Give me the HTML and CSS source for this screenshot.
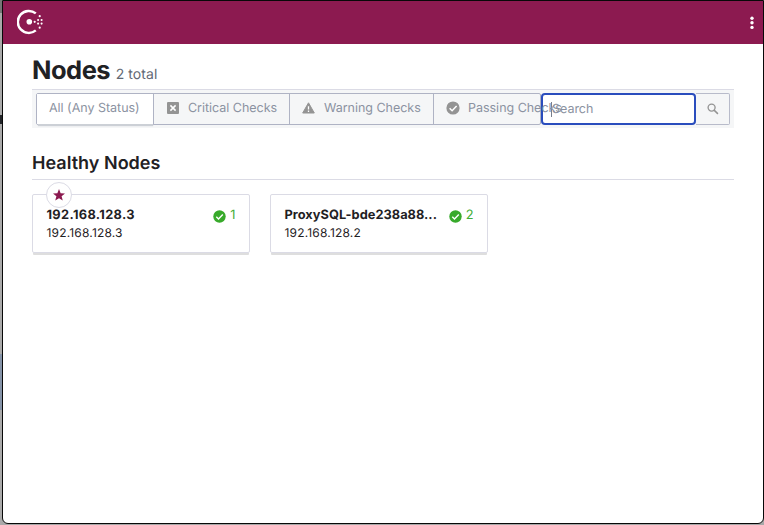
FILE: index.html
```html
<!DOCTYPE html>
<html lang="en">
<head>
<meta charset="utf-8">
<title>Nodes</title>
<link rel="stylesheet" href="styles.css">
</head>
<body>
<div class="edge"><i class="tab"></i><i class="panel"></i></div>
<div class="window">
  <header class="topbar">
    <svg class="logo" width="27" height="26" viewBox="0 0 27 26">
      <path d="M18.8 4.4A11 11 0 1 0 18.8 21.4" fill="none" stroke="#fff" stroke-width="2.5"/>
      <g fill="#fff"><circle cx="12.3" cy="12.8" r="2.8"/><circle cx="17.7" cy="12.8" r="1.1"/><circle cx="21.1" cy="11" r="1.05"/><circle cx="21.1" cy="14.6" r="1.05"/><circle cx="24.6" cy="11" r="1.05"/><circle cx="24.6" cy="14.6" r="1.05"/><circle cx="22.7" cy="7.2" r="1.1"/><circle cx="22.7" cy="18.7" r="1.1"/></g>
    </svg>
    <svg class="more" width="4" height="14" viewBox="0 0 4 14" fill="#fff"><circle cx="2" cy="2.3" r="1.7"/><circle cx="2" cy="6.8" r="1.7"/><circle cx="2" cy="11.4" r="1.7"/></svg>
  </header>
  <main class="content">
    <div class="heading"><h1>Nodes</h1><span class="total">2 total</span></div>
    <div class="filters">
      <div class="group">
        <button class="filter active">All (Any Status)</button>
        <button class="filter critical"><svg width="12" height="12" viewBox="0 0 12 12"><rect width="12" height="12" rx="1" fill="#949494"/><path d="M3.4 3.4l5.2 5.2M8.6 3.4L3.4 8.6" stroke="#fff" stroke-width="1.5"/></svg>Critical Checks</button>
        <button class="filter warning"><svg width="13" height="12" viewBox="0 0 13 12"><path d="M6.5.8L12.3 11H.7z" fill="#949494" stroke="#949494" stroke-linejoin="round"/><path d="M6.5 4.3v3.2M6.5 8.6v1.3" stroke="#fff" stroke-width="1.3"/></svg>Warning Checks</button>
        <button class="filter passing"><svg width="14" height="14" viewBox="0 0 14 14"><circle cx="7" cy="7" r="6.6" fill="#949494"/><path d="M3.6 7.2l2.5 2.5 4.5-4.8" fill="none" stroke="#fff" stroke-width="1.5"/></svg><span>Passing Checks</span></button>
      </div>
      <div class="search"><span class="caret"></span><span class="placeholder">Search</span></div>
      <button class="go"><svg width="12" height="12" viewBox="0 0 12 12" fill="none" stroke="#949494"><circle cx="4.6" cy="4.6" r="3.5" stroke-width="1.35"/><path d="M7.1 7.1l3.8 3.8" stroke-width="1.5"/></svg></button>
    </div>
    <h2>Healthy Nodes</h2>
    <div class="cards">
      <article class="card">
        <span class="leader"><svg width="12" height="12" viewBox="0 0 24 24"><path fill="#8c1a50" d="M12 0l3.3 8.3 8.7.5-6.8 5.5 2.3 8.9L12 18.5l-7.5 4.7 2.3-8.9L0 8.8l8.7-.5z"/></svg></span>
        <div class="name-row"><strong class="address">192.168.128.3</strong><span class="checks"><svg width="13" height="13" viewBox="0 0 13 13"><circle cx="6.5" cy="6.5" r="6.2" fill="#38aa2b"/><path d="M3.3 6.8l2.2 2.2 4.3-4.4" fill="none" stroke="#fff" stroke-width="1.4"/></svg>1</span></div>
        <p>192.168.128.3</p>
      </article>
      <article class="card">
        <div class="name-row"><strong>ProxySQL-bde238a88...</strong><span class="checks"><svg width="13" height="13" viewBox="0 0 13 13"><circle cx="6.5" cy="6.5" r="6.2" fill="#38aa2b"/><path d="M3.3 6.8l2.2 2.2 4.3-4.4" fill="none" stroke="#fff" stroke-width="1.4"/></svg>2</span></div>
        <p>192.168.128.2</p>
      </article>
    </div>
  </main>
</div>
</body>
</html>
```
FILE: styles.css
```css
* { box-sizing: border-box; }
body { margin: 0; height: 525px; display: flex; overflow: hidden; background: #a8a8a8; font-family: Inter, sans-serif; color: #1f2124; text-rendering: geometricPrecision; }
h1, h2, p { margin: 0; }
button { font: inherit; margin: 0; text-rendering: inherit; }
svg { display: block; flex: none; }
.edge { width: 2px; height: 525px; flex: none; background: linear-gradient(#777 0 13px, #aaa 13px); }
.edge .tab { display: block; height: 9px; margin-top: 115px; background: #222428; }
.edge .panel { display: block; height: 56px; margin-top: 230px; background: #8593a8; }
.window { width: 762px; height: 524px; flex: none; border: 1px solid #080808; border-radius: 0 0 6px 6px; overflow: hidden; background: #fff; }
.topbar { height: 43px; display: flex; justify-content: space-between; padding: 8px 9px 0 14px; background: #8c1a50; }
.more { margin-top: 7px; }
.content { padding: 0 29px; }
.heading { height: 46px; display: flex; align-items: baseline; gap: 5.5px; padding-top: 11px; border-bottom: 1px solid #dbdbe5; }
h1 { font-size: 25.5px; line-height: 31px; font-weight: 700; letter-spacing: -.5px; }
.total { font-size: 14px; color: #626873; letter-spacing: .1px; }
.filters { height: 38px; display: flex; align-items: flex-start; padding: 3px 4px; background: #f5f6f7; font-size: 12.5px; color: #8b92a1; letter-spacing: -.02px; }
.group { width: 505px; height: 32px; flex: none; display: flex; border: 1px solid #afb3c4; border-radius: 2px; }
.filter { height: 30px; display: flex; align-items: center; padding: 0 0 2px; color: inherit; background: transparent; border: 0; border-right: 1px solid #afb3c4; letter-spacing: inherit; white-space: nowrap; }
.filter.active { width: 117px; flex: none; padding-left: 12px; background: #fff; box-shadow: 0 3px 1px -1px #ccd0d6; }
.critical { width: 136px; flex: none; padding-left: 13px; gap: 9px; }
.warning { width: 144px; flex: none; padding-left: 12px; gap: 9px; }
.passing { width: 106px; flex: none; padding-left: 12px; gap: 8px; border: 0; }
.passing span { position: relative; z-index: 2; }
.search { width: 155px; height: 32px; flex: none; display: flex; align-items: center; border: 2px solid #2a4dbd; border-radius: 4px; background: #fff; padding-left: 8px; }
.caret { width: 1px; height: 15px; background: #777e8c; }
.go { width: 34px; height: 32px; flex: none; display: flex; align-items: center; justify-content: center; padding: 0; background: transparent; border: 1px solid #b8bbca; border-left: 0; border-radius: 0 2px 2px 0; }
h2 { height: 52px; padding-top: 24px; border-bottom: 1px solid #dbdbe5; font-size: 18px; line-height: 23px; font-weight: 600; letter-spacing: .02px; }
.cards { display: flex; gap: 20px; padding-top: 14px; }
.card { position: relative; width: 218px; height: 59px; padding: 12px 13.5px 0 13.5px; border: 1px solid #dbdbe5; border-radius: 2px; box-shadow: 0 3px 0 -1px #dedede; }
.name-row { display: flex; justify-content: space-between; height: 18px; }
.name-row strong { font-size: 12.8px; line-height: 18px; font-weight: 700; letter-spacing: .03px; }
.name-row .address { letter-spacing: .35px; }
.card p { font-size: 12px; line-height: 16px; letter-spacing: .18px; }
.checks { display: flex; align-items: center; gap: 4px; font-size: 12.8px; line-height: 18px; color: #42ad35; }
.leader { position: absolute; left: 13px; top: -13px; width: 26px; height: 26px; display: flex; align-items: center; justify-content: center; border: 1px solid #dbdbe5; border-radius: 50%; background: #fff; }
```
